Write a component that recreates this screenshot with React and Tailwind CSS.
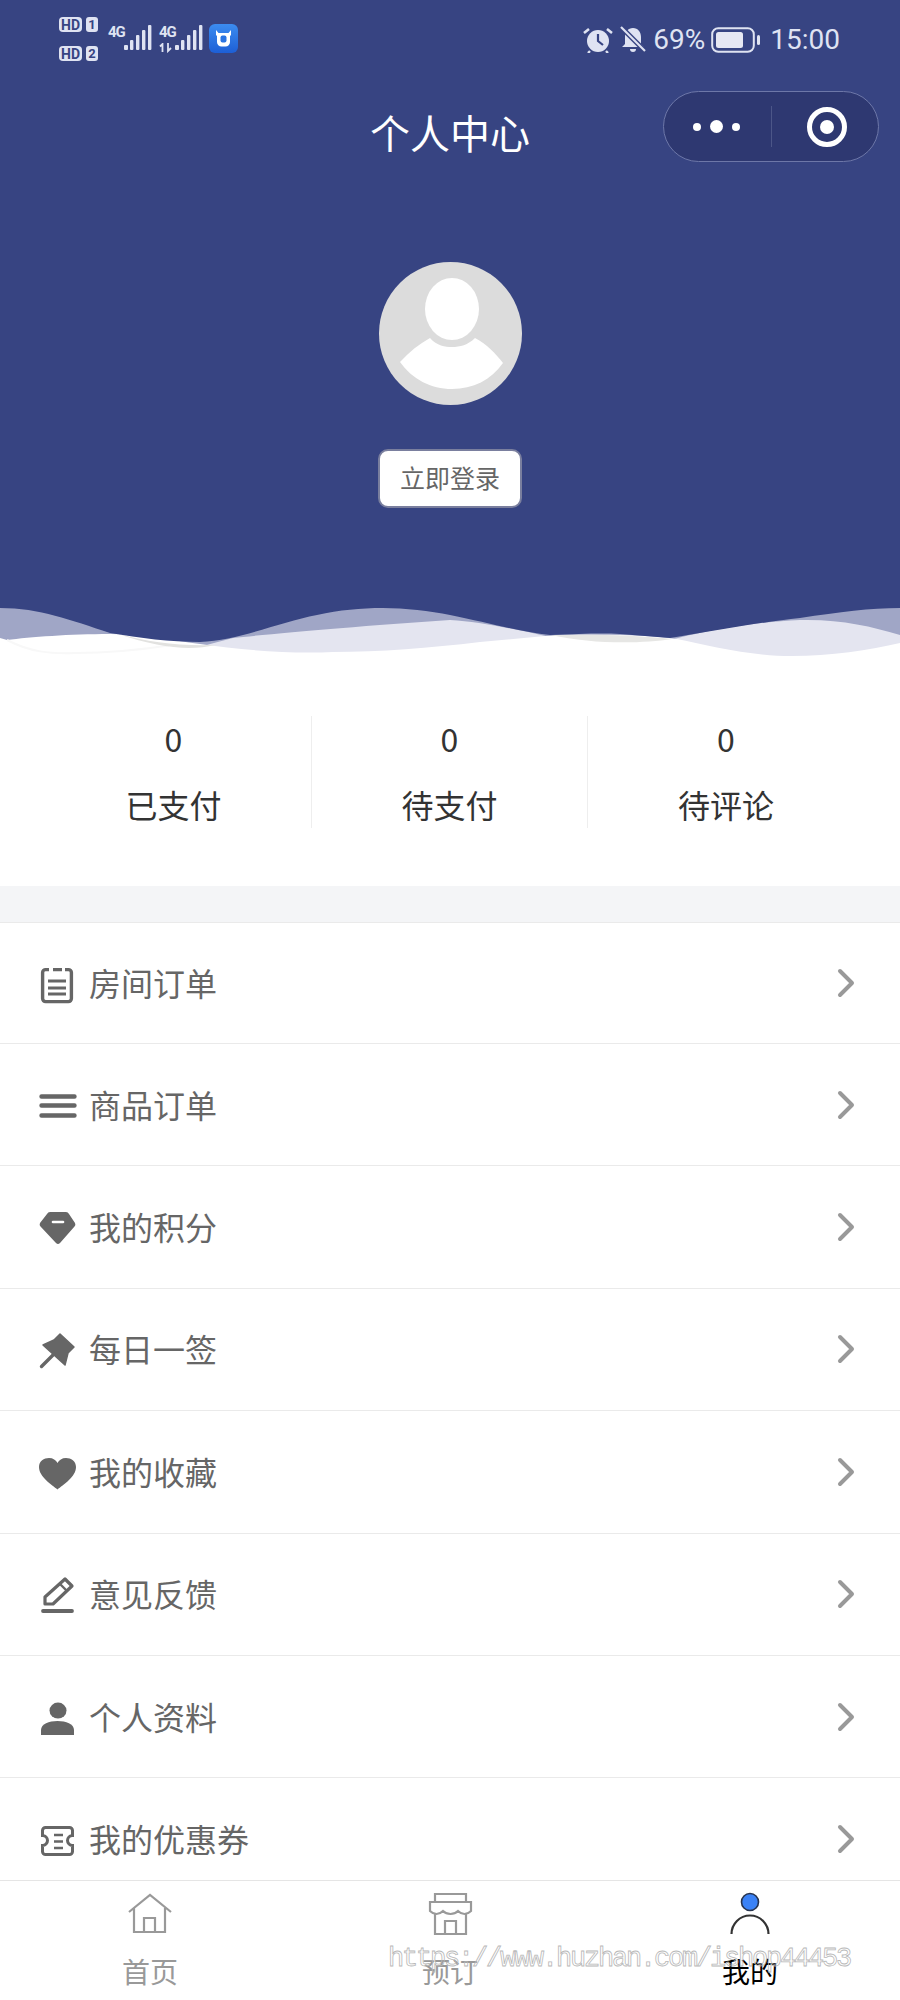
import React from 'react';

const BLUE = '#374482';

const Bars = ({ className }) => (
  <svg className={className} width="28" height="26" viewBox="0 0 28 26" fill="#dfe3f2">
    <rect x="0" y="20" width="4" height="5" rx="1" />
    <rect x="6" y="15" width="3.4" height="10" rx="1" />
    <rect x="12" y="10" width="3.4" height="15" rx="1" />
    <rect x="18" y="5" width="3.4" height="20" rx="1" />
    <rect x="24" y="0" width="3.4" height="25" rx="1" />
  </svg>
);

const SimRow = ({ n }) => (
  <div className="flex items-center gap-[4px]">
    <span className="flex h-[15px] w-[23px] items-center justify-center rounded-[4px] bg-[#dfe3f2] font-['Roboto',sans-serif] text-[14px] leading-none font-bold text-[#374482]">HD</span>
    <span className="flex h-[15px] w-[12px] items-center justify-center rounded-[3px] bg-[#dfe3f2] font-['Roboto',sans-serif] text-[13px] leading-none font-bold text-[#374482]">{n}</span>
  </div>
);

const StatusBar = () => (
  <div className="flex h-[91px] pt-[17px] pl-[59px] pr-[60px]">
    <div className="flex w-[41px] flex-col gap-[14px]">
      <SimRow n="1" />
      <SimRow n="2" />
    </div>
    <div className="ml-[8px] flex items-start pt-[8px]">
      <span className="w-[16px] font-['Roboto',sans-serif] text-[15px] leading-[14px] font-bold tracking-[-1px] text-[#dfe3f2]">4G</span>
      <Bars />
      <div className="ml-[7px] flex w-[16px] flex-col">
        <span className="font-['Roboto',sans-serif] text-[15px] leading-[14px] font-bold tracking-[-1px] text-[#dfe3f2]">4G</span>
        <svg width="13" height="10" viewBox="0 0 13 10" className="mt-[4px]" fill="none" stroke="#dfe3f2" strokeWidth="1.8">
          <path d="M3.5 9V1L1 3.5M9 0V8L12 5" />
        </svg>
      </div>
      <Bars />
      <svg width="29" height="29" viewBox="0 0 29 29" className="mt-[-1px] ml-[6px]">
        <defs>
          <linearGradient id="cow" x1="0" y1="0" x2="0" y2="1">
            <stop offset="0" stopColor="#3c8cf0" />
            <stop offset="1" stopColor="#1d5fd6" />
          </linearGradient>
        </defs>
        <rect width="29" height="29" rx="6" fill="url(#cow)" />
        <path d="M7 6l2.5 3h10L22 6v5l-1 1v6a4.5 4.5 0 0 1-4.5 4.5h-4A4.5 4.5 0 0 1 8 18v-6l-1-1z" fill="#fff" />
        <rect x="11.5" y="11.5" width="6" height="7" rx="2" fill="#2a74e2" />
      </svg>
    </div>
    <div className="ml-auto flex h-[28px] items-center self-start pt-[17px] text-[#dfe3f2]">
      <svg width="30" height="26" viewBox="0 0 30 26" fill="#dfe3f2">
        <circle cx="15" cy="14" r="11" />
        <path d="M15 7v7l5 4" fill="none" stroke={BLUE} strokeWidth="2.2" />
        <path d="M1 6l5-4M29 6l-5-4" fill="none" stroke="#dfe3f2" strokeWidth="2.6" />
        <path d="M7 24l-2 2M23 24l2 2" fill="none" stroke="#dfe3f2" strokeWidth="2.4" />
      </svg>
      <svg width="26" height="27" viewBox="0 0 26 27" className="ml-[7px]" fill="#dfe3f2">
        <path d="M13 2c5 0 8 4 8 9v7l3 3H2l3-3v-7c0-5 3-9 8-9z" />
        <path d="M10 23h6a3 3 0 0 1-6 0z" />
        <path d="M1 1l24 24" stroke={BLUE} strokeWidth="5" />
        <path d="M1 1l24 24" stroke="#dfe3f2" strokeWidth="2.2" />
      </svg>
      <span className="ml-[7px] font-['Roboto',sans-serif] text-[28px] leading-none">69%</span>
      <svg width="50" height="26" viewBox="0 0 50 26" className="ml-[6px]">
        <rect x="1.2" y="1.2" width="41.6" height="23.6" rx="6" fill="none" stroke="#dfe3f2" strokeWidth="2" />
        <rect x="5" y="5" width="27" height="16" rx="2.5" fill="#e6e8f3" />
        <rect x="46" y="8" width="3" height="10" rx="1.5" fill="#dfe3f2" />
      </svg>
      <span className="ml-[9px] font-['Roboto',sans-serif] text-[28px] leading-none">15:00</span>
    </div>
  </div>
);

const TitleBar = () => (
  <div className="grid h-[71px] grid-cols-[1fr_auto_1fr] items-center">
    <div />
    <h1 className="pt-[10px] text-[40px] leading-none font-normal text-white">个人中心</h1>
    <div className="flex justify-end pr-[21px]">
      <div className="flex h-[71px] w-[216px] items-center rounded-full border border-[#6d77a8] bg-[#2e3871]">
        <div className="flex h-[41px] w-[108px] items-center justify-center gap-[9px] border-r border-[#4c5688] pr-[2px]">
          <span className="h-[8px] w-[8px] rounded-full bg-white" />
          <span className="h-[13px] w-[13px] rounded-full bg-white" />
          <span className="h-[8px] w-[8px] rounded-full bg-white" />
        </div>
        <div className="flex flex-1 justify-center pl-[4px]">
          <span className="flex h-[40px] w-[40px] items-center justify-center rounded-full border-[5px] border-white">
            <span className="h-[14px] w-[14px] rounded-full bg-white" />
          </span>
        </div>
      </div>
    </div>
  </div>
);

const Avatar = () => (
  <svg width="143" height="143" viewBox="0 0 143 143" className="block">
    <circle cx="71.5" cy="71.5" r="71.5" fill="#dcdcdc" />
    <ellipse cx="73" cy="47" rx="27" ry="31" fill="#fff" />
    <path d="M21 100C30 90 40 82 51 76C58 84 66 85 73 85C81 85 89 83 96 76C108 82 117 92 124 101C112 118 94 127 73 127C52 127 33 117 21 100Z" fill="#fff" />
  </svg>
);

const Wave = () => (
  <svg viewBox="0 0 900 60" className="block h-[60px] w-full" preserveAspectRatio="none">
    <rect width="900" height="60" fill="#a0a6c6" />
    <path d="M195 40L233 30C270 26 360 18 450 12C480 14 510 20 550 29L670 32C700 24 750 14 800 12C840 11 870 18 900 27V60H195Z" fill="#e4e5f0" />
    <path d="M0 30L7 32C30 29 70 26 110 26C140 26 170 32 200 36C240 42 290 46 333 44C380 44 430 40 480 34L545 28C590 26 640 26 677 31C710 38 750 48 792 48C830 48 870 42 900 35V60H0Z" fill="#fff" />
    <path d="M7 32C30 44 50 46 75 45C110 45 140 42 172 37" fill="none" stroke="#f8f8f8" strokeWidth="2" />
    <path d="M118 26C150 34 175 38 215 37C190 43 160 40 118 26Z" fill="#e2e2e0" />
    <path d="M551 27C590 26 640 27 672 31C640 36 590 36 551 27Z" fill="#e6e6e4" />
    <path d="M0 0C40 0 70 12 110 25C140 30 170 34 200 34C240 32 280 14 317 7C340 2 360 0 383 0C405 0 430 3 450 7C490 15 520 24 550 27C580 26 600 25 620 26L670 30C710 24 760 14 800 10C840 4 870 0 900 0Z" fill={BLUE} />
  </svg>
);

const stats = ['已支付', '待支付', '待评论'];

const Stats = () => (
  <div className="grid h-[218px] grid-cols-3 px-[36px] pt-[48px]">
    {stats.map((label, i) => (
      <div key={label} className={`flex h-[112px] flex-col items-center text-[#333] ${i < 2 ? 'border-r border-[#eeeeee]' : ''}`}>
        <span className="text-[32px] leading-[44px]">0</span>
        <span className="mt-[24px] text-[32px] leading-[40px]">{label}</span>
      </div>
    ))}
  </div>
);

const ICON = '#666';

const ClipboardIcon = () => (
  <g fill="none" stroke={ICON} strokeWidth="3.4">
    <path d="M9 8.6H5.6a3 3 0 0 0-3 3v26a3 3 0 0 0 3 3h22.8a3 3 0 0 0 3-3v-26a3 3 0 0 0-3-3H25M13 8.6h9" />
    <path d="M8 20h18M8 27h18M8 33h18" strokeWidth="2.8" />
  </g>
);

const MenuIcon = () => (
  <path d="M1.5 13.5h33M1.5 22.5h33M1.5 32.5h33" fill="none" stroke={ICON} strokeWidth="4.4" strokeLinecap="round" />
);

const GemIcon = () => (
  <g>
    <path d="M10 7H26q2 0 3 2L35 18q1 2-.5 3.5L20 38q-2 2-4 0L.5 21.5q-1.5-1.5-.5-3.5L7 9q1-2 3-2Z" fill={ICON} />
    <path d="M13 17h10" stroke="#fff" strokeWidth="2.6" strokeLinecap="round" />
  </g>
);

const PinIcon = () => (
  <g>
    <path d="M3 18L14 13L20 7L34 20L28 26L25 38Z" fill={ICON} stroke={ICON} strokeWidth="1.5" strokeLinejoin="round" />
    <path d="M1.5 39.5L14 27" stroke={ICON} strokeWidth="3.4" strokeLinecap="round" />
  </g>
);

const HeartIcon = () => (
  <path d="M17.5 39.5C12 35-1 27-1 17C-1 11 4 8 9 8C13 8 16 10 17.5 13C19 10 22 8 26 8C31 8 36 11 36 17C36 27 23 35 17.5 39.5Z" fill={ICON} />
);

const EditIcon = () => (
  <g fill="none" stroke={ICON} strokeWidth="3.2" strokeLinejoin="round">
    <path d="M5 32V25L25 7L32 14L13 32Z" />
    <path d="M20 12L27 19" strokeWidth="2.4" />
    <path d="M3 39H32" strokeWidth="3.8" strokeLinecap="round" />
  </g>
);

const UserIcon = () => (
  <g fill={ICON}>
    <ellipse cx="18" cy="15.6" rx="8.5" ry="8" />
    <path d="M1 40V35C1 29 9 26 17.5 26C26 26 34 29 34 35V40Z" />
  </g>
);

const TicketIcon = () => (
  <g fill="none" stroke={ICON} strokeWidth="3">
    <path d="M5.5 10.5h24a3 3 0 0 1 3 3v5a5 5 0 0 0 0 10v6a3 3 0 0 1-3 3h-24a3 3 0 0 1-3-3v-6a5 5 0 0 0 0-10v-5a3 3 0 0 1 3-3Z" />
    <path d="M14 18h9M14 24.5h9M14 31h9" strokeWidth="2.6" />
  </g>
);

const menu = [
  { label: '房间订单', Icon: ClipboardIcon },
  { label: '商品订单', Icon: MenuIcon },
  { label: '我的积分', Icon: GemIcon },
  { label: '每日一签', Icon: PinIcon },
  { label: '我的收藏', Icon: HeartIcon },
  { label: '意见反馈', Icon: EditIcon },
  { label: '个人资料', Icon: UserIcon },
  { label: '我的优惠券', Icon: TicketIcon },
];

const MenuRow = ({ label, Icon }) => (
  <div className="flex h-[122.4px] shrink-0 items-center border-b border-[#eaeaea] pr-[45px] pl-[40px] first:h-[121px]">
    <svg width="36" height="44" viewBox="0 0 36 44" className="shrink-0 overflow-visible">
      <Icon />
    </svg>
    <span className="ml-[13px] pb-[2px] text-[32px] leading-none text-[#666]">{label}</span>
    <svg width="18" height="32" viewBox="0 0 18 32" className="ml-auto" fill="none" stroke="#999" strokeWidth="4" strokeLinecap="round" strokeLinejoin="round">
      <path d="M3 4L15 16L3 28" />
    </svg>
  </div>
);

const TabItem = ({ label, active, children }) => (
  <div className="flex flex-col items-center">
    <svg width="60" height="44" viewBox="0 0 60 44" fill="none" stroke="#999" strokeWidth="2.2">
      {children}
    </svg>
    <span className={`mt-[15px] text-[28px] leading-[40px] ${active ? 'text-black' : 'text-[#999]'}`}>{label}</span>
  </div>
);

const TabBar = () => (
  <div className="relative h-[120px] shrink-0 border-t border-[#e5e5e5] bg-white pt-[11px]">
    <div className="grid grid-cols-3">
      <TabItem label="首页">
        <path d="M9 20L30 3L51 20M14 16V40H45V16" />
        <path d="M24 40V26H35V40" />
      </TabItem>
      <TabItem label="预订">
        <path d="M15 10V2H46V10" />
        <path d="M10 10H51V19C47 23 42 23 38 19C34 23 27 23 23 19C19 23 14 23 10 19Z" />
        <path d="M15 22V42H46V22M25 42V29H36V42" />
      </TabItem>
      <TabItem label="我的" active>
        <circle cx="30" cy="10" r="8.5" fill="#3b82f6" stroke="#27344f" strokeWidth="1.6" />
        <path d="M11.5 42A18.5 18.5 0 0 1 48.5 42" stroke="#333" />
      </TabItem>
    </div>
    <span className="absolute top-[63px] left-[388px] font-['Liberation_Mono',monospace] text-[27px] leading-[30px] tracking-[-2.2px] whitespace-nowrap text-transparent [-webkit-text-stroke:0.8px_#b8b8b8]">https://www.huzhan.com/ishop44453</span>
  </div>
);

export default function App() {
  return (
    <div className="flex h-[2000px] flex-col overflow-hidden bg-white font-['Noto_Sans_CJK_SC','Noto_Sans',sans-serif]">
      <section className="h-[608px] shrink-0 bg-[#374482]">
        <StatusBar />
        <TitleBar />
        <div className="mt-[100px] flex flex-col items-center">
          <Avatar />
          <button className="mt-[44px] flex h-[59px] w-[144px] items-center justify-center rounded-[10px] border-2 border-[#7a7f9e] bg-white pb-[2px] text-[25px] text-[#666]">立即登录</button>
        </div>
      </section>
      <Wave />
      <Stats />
      <div className="h-[37px] shrink-0 border-b border-[#eaeaea] bg-[#f4f5f7]" />
      <div className="flex min-h-0 flex-1 flex-col overflow-hidden">
        {menu.map((item) => (
          <MenuRow key={item.label} {...item} />
        ))}
      </div>
      <TabBar />
    </div>
  );
}
